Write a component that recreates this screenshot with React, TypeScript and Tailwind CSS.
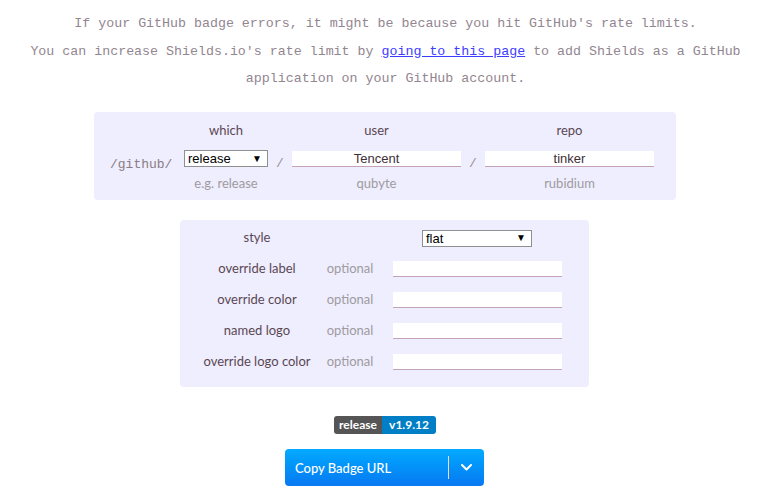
const mono = { fontFamily: '"Liberation Mono", "DejaVu Sans Mono", monospace' }

function FakeSelect({ value, width }: { value: string; width: string }) {
  return (
    <div
      className={`${width} h-[17px] flex items-center justify-between bg-white border border-[#8f8f8f] pl-[3px] pr-[5px] text-[13px] leading-none text-black font-['Liberation_Sans',Arial,sans-serif]`}
    >
      <span>{value}</span>
      <span className="text-[10px]">▼</span>
    </div>
  )
}

function TextInput({ value = '' }: { value?: string }) {
  return (
    <div className="w-[169px] h-[16px] bg-white border-b border-[#c4a3b8] flex items-center justify-center text-[13px] leading-none text-[#3f2f37] font-['Liberation_Sans',Arial,sans-serif]">
      {value}
    </div>
  )
}

function PathColumn({
  label,
  hint,
  children,
  width,
}: {
  label: string
  hint: string
  children: React.ReactNode
  width: string
}) {
  return (
    <div className={`${width} flex flex-col items-center`}>
      <div className="h-[20px] flex items-center text-[13px] text-[#5b4753]">{label}</div>
      <div className="h-[36px] flex items-center">{children}</div>
      <div className="h-[14px] flex items-center text-[13px] text-[#a09aa0]">{hint}</div>
    </div>
  )
}

const options = ['override label', 'override color', 'named logo', 'override logo color']

export default function App() {
  return (
    <div className="w-[771px] h-[493px] bg-white overflow-hidden font-['Lato','Open_Sans',sans-serif]">
      <div
        className="pt-[10px] text-center text-[13.3px] leading-[27.5px] text-[#928690]"
        style={mono}
      >
        <div>If your GitHub badge errors, it might be because you hit GitHub's rate limits.</div>
        <div>
          You can increase Shields.io's rate limit by{' '}
          <a href="#" className="text-[#3d3dff] underline">
            going to this page
          </a>{' '}
          to add Shields as a GitHub
        </div>
        <div>application on your GitHub account.</div>
      </div>

      <div className="mt-[19px] ml-[94px] w-[582px] h-[88px] rounded-[4px] bg-[#eeeefe] pt-[9px] pl-[16px] flex">
        <div className="w-[62px] pt-[34px] text-[13px] text-[#8a7c84]" style={mono}>
          /github/
        </div>
        <div className="w-[12px]" />
        <PathColumn label="which" hint="e.g. release" width="w-[84px]">
          <FakeSelect value="release" width="w-[84px]" />
        </PathColumn>
        <div className="w-[24px] pt-[33px] text-center text-[13px] text-[#9a8f95]" style={mono}>
          /
        </div>
        <PathColumn label="user" hint="qubyte" width="w-[169px]">
          <TextInput value="Tencent" />
        </PathColumn>
        <div className="w-[24px] pt-[33px] text-center text-[13px] text-[#9a8f95]" style={mono}>
          /
        </div>
        <PathColumn label="repo" hint="rubidium" width="w-[169px]">
          <TextInput value="tinker" />
        </PathColumn>
      </div>

      <div className="mt-[20px] ml-[180px] w-[409px] h-[167px] rounded-[4px] bg-[#eeeefe] pt-[3px] pl-[15px]">
        <div className="grid grid-cols-[124px_62px_12px_169px] auto-rows-[31px] items-center text-[13px]">
          <div className="text-center text-[#5b4753]">style</div>
          <div />
          <div />
          <div className="flex justify-center pr-[1px]">
            <FakeSelect value="flat" width="w-[110px]" />
          </div>
          {options.map((o) => (
            <div key={o} className="contents">
              <div className="text-center text-[#5b4753] whitespace-nowrap">{o}</div>
              <div className="text-center text-[#a09aa0]">optional</div>
              <div />
              <TextInput />
            </div>
          ))}
        </div>
      </div>

      <div className="mt-[29px] flex justify-center">
        <div className="flex h-[18px] rounded-[3px] overflow-hidden text-[12px] font-bold text-white leading-[18px] ml-[-1px]">
          <span className="bg-[#555555] w-[48px] text-center">release</span>
          <span className="bg-[#007ec6] w-[54px] text-center">v1.9.12</span>
        </div>
      </div>

      <div className="mt-[15px] ml-[285px] w-[199px] h-[37px] rounded-[4px] bg-gradient-to-b from-[#05aaff] to-[#0a78f2] flex items-center text-white">
        <span className="pl-[10px] pt-[4px] flex-1 text-[13px] font-medium">Copy Badge URL</span>
        <div className="w-px h-[23px] bg-[#f3d9c8]" />
        <div className="w-[35px] flex justify-center pt-[1px]">
          <svg width="11" height="7" viewBox="0 0 11 7" fill="none">
            <path d="M1 1l4.5 4.5L10 1" stroke="white" strokeWidth="2" strokeLinecap="round" strokeLinejoin="round" />
          </svg>
        </div>
      </div>
    </div>
  )
}
